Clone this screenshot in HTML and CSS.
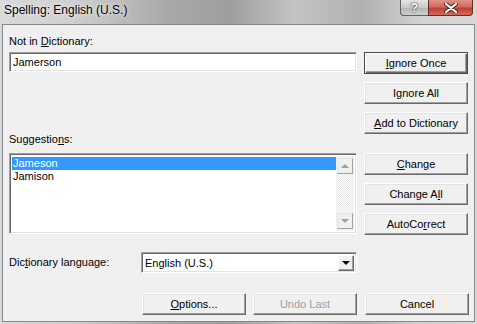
FILE: index.html
```html
<!DOCTYPE html>
<html lang="en">
<head>
  <meta charset="UTF-8">
  <title>Spelling: English (U.S.)</title>
  <link rel="stylesheet" href="styles.css">
</head>
<body>
  <div class="window">
    <div class="titlebar">
      <span class="title">Spelling: English (U.S.)</span>
      <div class="caption-buttons">
        <span class="cap-btn help">?</span>
        <span class="cap-btn close">
          <svg width="14" height="10" viewBox="0 0 14 10">
            <path d="M2 1 L12 9 M12 1 L2 9" stroke="#3a2a2a" stroke-width="4" stroke-linecap="round"/>
            <path d="M2 1 L12 9 M12 1 L2 9" stroke="#fff" stroke-width="2.2" stroke-linecap="round"/>
          </svg>
        </span>
      </div>
    </div>

    <div class="panel">
      <div class="top">
        <div class="left">
          <div class="label">Not in <u>D</u>ictionary:</div>
          <div class="field">Jamerson</div>
          <div class="label sugg-label">Suggestio<u>n</u>s:</div>
          <div class="listbox">
            <ul class="items">
              <li class="selected">Jameson</li>
              <li>Jamison</li>
            </ul>
            <div class="scrollbar">
              <span class="scroll-btn"><span class="tri-up"></span></span>
              <span class="scroll-btn"><span class="tri-down"></span></span>
            </div>
          </div>
        </div>

        <div class="right">
          <button class="btn default"><u>I</u>gnore Once</button>
          <button class="btn">I<u>g</u>nore All</button>
          <button class="btn"><u>A</u>dd to Dictionary</button>
          <button class="btn group-start"><u>C</u>hange</button>
          <button class="btn">Change A<u>l</u>l</button>
          <button class="btn">AutoCo<u>r</u>rect</button>
        </div>
      </div>

      <div class="lang-row">
        <div class="label lang-label">Dic<u>t</u>ionary language:</div>
        <div class="combo">
          <span class="combo-text">English (U.S.)</span>
          <span class="combo-btn"><span class="tri-down black"></span></span>
        </div>
      </div>

      <div class="bottom-row">
        <button class="btn"><u>O</u>ptions...</button>
        <button class="btn disabled">Undo Last</button>
        <button class="btn">Cancel</button>
      </div>
    </div>
  </div>
</body>
</html>
```

FILE: styles.css
```css
body {
  margin: 0;
  font-family: "Liberation Sans", Arial, sans-serif;
  font-size: 11px;
  color: #000;
}

.window {
  width: 477px;
  height: 324px;
  overflow: hidden;
  background: linear-gradient(90deg, #d9d9d9 0%, #cfcfcf 15%, #a9a9a9 35%, #9e9e9e 48%, #c4c4c4 62%, #b0b0b0 76%, #d2d2d2 88%, #d8d8d8 100%);
}

.titlebar {
  height: 24px;
  display: flex;
  justify-content: space-between;
  position: relative;
}

.title {
  font-size: 12px;
  line-height: 15px;
  padding: 3px 0 0 4px;
  color: #000;
  text-shadow: 0 0 6px #eee, 0 0 3px #eee;
}

.caption-buttons {
  display: flex;
  margin-right: 4px;
  height: 16px;
}

.cap-btn {
  display: flex;
  align-items: center;
  justify-content: center;
  height: 16px;
  box-sizing: border-box;
  border: 1px solid #5f6168;
  border-top: none;
}

.help {
  width: 28px;
  border-radius: 0 0 0 4px;
  border-right: none;
  background: linear-gradient(#e4e4e4, #c9c9c9 50%, #b3b3b3 51%, #cfcfcf);
  color: #fff;
  font-weight: bold;
  font-size: 12px;
  text-shadow: 0 0 2px #333, 0 0 1px #333;
}

.close {
  width: 45px;
  border-radius: 0 0 4px 0;
  border-color: #6a2a25;
  background: linear-gradient(#e1928a, #d06a5e 45%, #c2402f 55%, #d7685a);
}

.panel {
  margin-left: 2px;
  width: 473px;
  height: 298px;
  box-sizing: border-box;
  border: 1px solid #85898e;
  background: #f0f0f0;
  padding: 10px 5px 0 6px;
}

.top {
  display: flex;
  gap: 7px;
}

.left {
  width: 348px;
}

.label {
  line-height: 13px;
  height: 13px;
  white-space: nowrap;
}

.field {
  margin-top: 4px;
  height: 20px;
  box-sizing: border-box;
  background: #fff;
  border: 1px solid;
  border-color: #a0a0a0 #fff #fff #a0a0a0;
  box-shadow: inset 1px 1px #696969, inset -1px -1px #e3e3e3;
  padding-left: 3px;
  display: flex;
  align-items: center;
  line-height: 13px;
}

.sugg-label {
  margin-top: 61px;
}

.listbox {
  margin-top: 7px;
  height: 81px;
  box-sizing: border-box;
  background: #fff;
  border: 1px solid;
  border-color: #a0a0a0 #fff #fff #a0a0a0;
  box-shadow: inset 1px 1px #696969, inset -1px -1px #e3e3e3;
  padding: 2px 2px 2px 1px;
  display: flex;
}

.items {
  list-style: none;
  margin: 0;
  padding: 1px 0 0 1px;
  flex: 1;
}

.items li {
  height: 13px;
  line-height: 13px;
  padding-left: 1px;
}

.items li.selected {
  background: #3399ff;
  color: #fff;
}

.scrollbar {
  width: 17px;
  display: flex;
  flex-direction: column;
  justify-content: space-between;
  padding: 2px 0 2px 1px;
  background: repeating-conic-gradient(#fdfdfd 0 25%, #e9e9e9 0 50%) 0 0 / 2px 2px;
}

.scroll-btn {
  width: 16px;
  height: 16px;
  box-sizing: border-box;
  background: #f0f0f0;
  border: 1px solid;
  border-color: #e3e3e3 #a0a0a0 #a0a0a0 #e3e3e3;
  display: flex;
  align-items: center;
  justify-content: center;
}

.tri-up,
.tri-down {
  width: 0;
  height: 0;
  border-left: 4px solid transparent;
  border-right: 4px solid transparent;
}

.tri-up {
  border-bottom: 4px solid #a0a0a0;
}

.tri-down {
  border-top: 4px solid #a0a0a0;
}

.tri-down.black {
  border-left-width: 4px;
  border-right-width: 4px;
  border-top-color: #000;
}

.right {
  width: 104px;
  display: flex;
  flex-direction: column;
  gap: 8px;
  padding-top: 17px;
}

.btn {
  height: 22px;
  width: 104px;
  box-sizing: border-box;
  padding: 0;
  font-family: inherit;
  font-size: 11px;
  color: #000;
  background: #f0f0f0;
  border: 1px solid;
  border-color: #fff #696969 #696969 #fff;
  box-shadow: inset -1px -1px #a0a0a0, inset 1px 1px #e3e3e3;
}

.btn.default {
  border-color: #4a4a4a;
  box-shadow: inset 1px 1px #fff, inset -1px -1px #696969, inset -2px -2px #a0a0a0;
}

.btn.group-start {
  margin-top: 11px;
}

.btn.disabled {
  color: #a0a0a0;
}

.lang-row {
  display: flex;
  align-items: center;
  margin-top: 17px;
}

.lang-label {
  width: 132px;
}

.combo {
  width: 216px;
  height: 21px;
  box-sizing: border-box;
  background: #fff;
  border: 1px solid;
  border-color: #a0a0a0 #fff #fff #a0a0a0;
  box-shadow: inset 1px 1px #696969, inset -1px -1px #e3e3e3;
  display: flex;
  align-items: center;
  justify-content: space-between;
  padding: 0 2px 0 3px;
}

.combo-btn {
  width: 16px;
  height: 16px;
  box-sizing: border-box;
  background: #f0f0f0;
  border: 1px solid;
  border-color: #fff #696969 #696969 #fff;
  box-shadow: inset -1px -1px #a0a0a0;
  display: flex;
  align-items: center;
  justify-content: center;
}

.bottom-row {
  display: flex;
  justify-content: flex-end;
  margin-top: 20px;
}

.bottom-row .btn + .btn {
  margin-left: 7px;
}

.bottom-row .btn:last-child {
  margin-left: 8px;
}
```
